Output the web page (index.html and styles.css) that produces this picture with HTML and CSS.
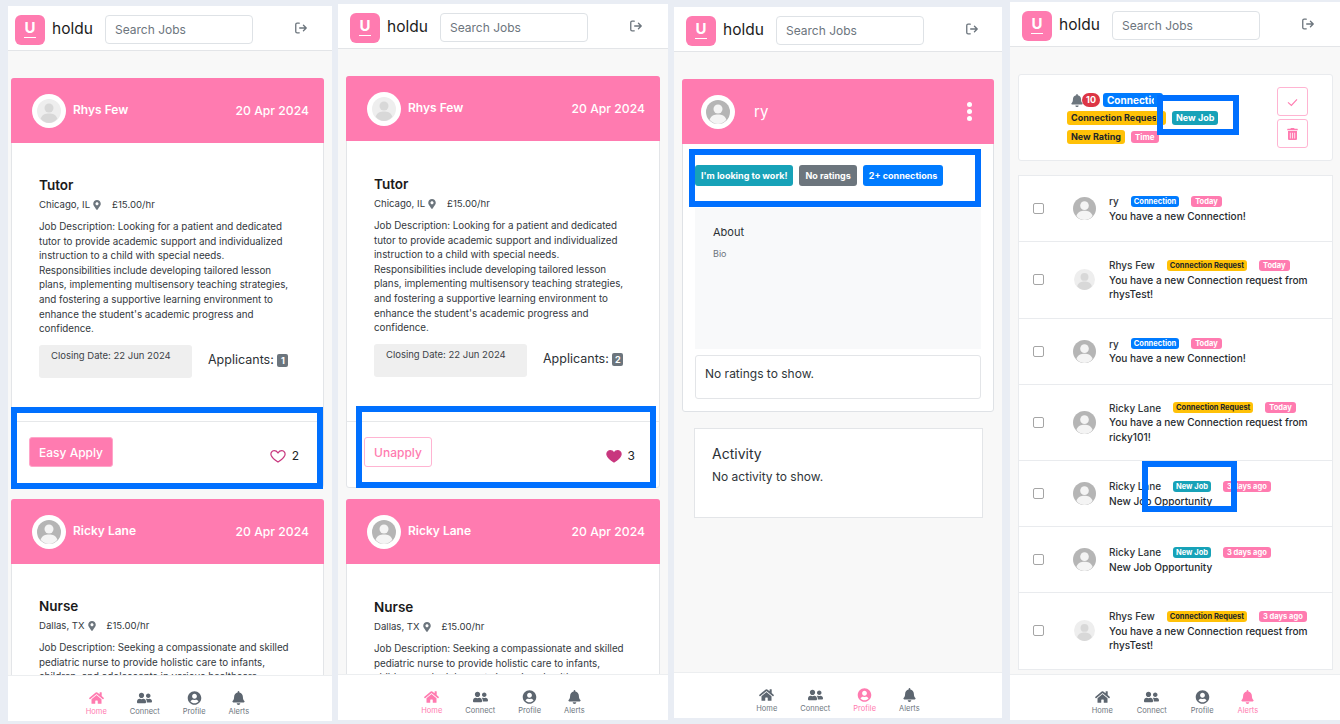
FILE: index.html
```html
<!DOCTYPE html>
<html>
<head>
<meta charset="utf-8"/>
<title>holdu</title>
<link rel="stylesheet" href="styles.css">
</head>
<body>

<svg class="defs" width="0" height="0">
  <symbol id="i-home" viewBox="0 0 576 512"><path d="M280.37 148.26L96 300.11V464a16 16 0 0 0 16 16l112.06-.29a16 16 0 0 0 15.92-16V368a16 16 0 0 1 16-16h64a16 16 0 0 1 16 16v95.64a16 16 0 0 0 16 16.05L464 480a16 16 0 0 0 16-16V300L295.67 148.26a12.19 12.19 0 0 0-15.3 0zM571.6 251.47L488 182.56V44.05a12 12 0 0 0-12-12h-56a12 12 0 0 0-12 12v72.61L318.47 43a48 48 0 0 0-61 0L4.34 251.47a12 12 0 0 0-1.6 16.9l25.5 31A12 12 0 0 0 45.15 301l235.22-193.74a12.19 12.19 0 0 1 15.3 0L530.9 301a12 12 0 0 0 16.9-1.6l25.5-31a12 12 0 0 0-1.7-16.93z"/></symbol>
  <symbol id="i-users" viewBox="0 0 640 512"><path d="M192 256c61.9 0 112-50.1 112-112S253.9 32 192 32 80 82.1 80 144s50.1 112 112 112zm76.8 32h-8.3c-20.8 10-43.9 16-68.5 16s-47.6-6-68.5-16h-8.3C51.6 288 0 339.6 0 403.2V432c0 26.5 21.5 48 48 48h288c26.5 0 48-21.5 48-48v-28.8c0-63.6-51.6-115.2-115.2-115.2zM480 256c53 0 96-43 96-96s-43-96-96-96-96 43-96 96 43 96 96 96zm48 32h-3.8c-13.9 4.8-28.6 8-44.2 8s-30.3-3.2-44.2-8H432c-20.4 0-39.2 5.9-55.7 15.4 24.4 26.3 39.7 61.2 39.7 99.8v38.4c0 2.2-.5 4.3-.6 6.4H592c26.5 0 48-21.5 48-48 0-61.9-50.1-112-112-112z"/></symbol>
  <symbol id="i-profile" viewBox="0 0 496 512"><path d="M248 8C111 8 0 119 0 256s111 248 248 248 248-111 248-248S385 8 248 8zm0 96c48.6 0 88 39.4 88 88s-39.4 88-88 88-88-39.4-88-88 39.4-88 88-88zm0 344c-58.7 0-111.3-26.6-146.5-68.2 18.8-35.4 55.6-59.8 98.5-59.8 2.4 0 4.8.4 7.1 1.1 13 4.2 26.6 6.9 40.9 6.9 14.3 0 28-2.7 40.9-6.9 2.3-.7 4.7-1.1 7.1-1.1 42.9 0 79.7 24.4 98.5 59.8C359.3 421.4 306.7 448 248 448z"/></symbol>
  <symbol id="i-bell" viewBox="0 0 448 512"><path d="M224 512c35.32 0 63.97-28.65 63.97-64H160.03c0 35.35 28.65 64 63.97 64zm215.39-149.71c-19.32-20.76-55.47-51.99-55.47-154.29 0-77.7-54.48-139.9-127.94-155.16V32c0-17.67-14.32-32-31.98-32s-31.98 14.33-31.98 32v20.84C118.56 68.1 64.08 130.3 64.08 208c0 102.3-36.15 133.53-55.47 154.29-6 6.45-8.66 14.16-8.61 21.71.11 16.4 12.98 32 32.1 32h383.8c19.12 0 32-15.6 32.1-32 .05-7.55-2.61-15.27-8.61-21.71z"/></symbol>
  <symbol id="i-pin" viewBox="0 0 384 512"><path d="M172.268 501.67C26.97 291.031 0 268.413 0 192 0 85.961 85.961 0 192 0s192 85.961 192 192c0 76.413-26.97 99.031-172.268 309.67-9.535 13.774-29.93 13.773-39.464 0zM192 272c44.183 0 80-35.817 80-80s-35.817-80-80-80-80 35.817-80 80 35.817 80 80 80z"/></symbol>
  <symbol id="i-trash" viewBox="0 0 448 512"><path d="M32 464a48 48 0 0 0 48 48h288a48 48 0 0 0 48-48V128H32zm272-256a16 16 0 0 1 32 0v224a16 16 0 0 1-32 0zm-96 0a16 16 0 0 1 32 0v224a16 16 0 0 1-32 0zm-96 0a16 16 0 0 1 32 0v224a16 16 0 0 1-32 0zM432 32H312l-9.4-18.7A24 24 0 0 0 281.1 0H166.8a23.72 23.72 0 0 0-21.4 13.3L136 32H16A16 16 0 0 0 0 48v32a16 16 0 0 0 16 16h416a16 16 0 0 0 16-16V48a16 16 0 0 0-16-16z"/></symbol>
  <symbol id="i-heart" viewBox="0 0 24 24"><path d="M12 21s-8.5-5.3-10.3-10.2C.6 7.4 2.8 4 6.2 4c2.4 0 4.4 1.3 5.8 3.3C13.4 5.3 15.4 4 17.8 4c3.4 0 5.6 3.4 4.5 6.8C20.5 15.7 12 21 12 21z"/></symbol>
  <symbol id="i-logout" viewBox="0 0 16 16"><path d="M6 2.5H3.5a1.5 1.5 0 0 0-1.500 1.500v8a1.500 1.500 0 0 0 1.500 1.500H6M6.500 8H14M10.800 4.800 14 8l-3.200 3.200" fill="none" stroke="currentColor" stroke-width="1.500" stroke-linecap="round" stroke-linejoin="round"/></symbol>
  <symbol id="i-avatar" viewBox="0 0 40 40"><circle cx="20" cy="20" r="20" fill="currentColor"/><circle cx="20" cy="15" r="7.500" fill="var(--fg)"/><path d="M6 33c2-7 8-9 14-9s12 2 14 9c-3.500 4.500-8.500 7-14 7S9.500 37.500 6 33z" fill="var(--fg)"/></symbol>
</svg>

<!-- home, not applied -->
<section class="screen s1">
  <header class="top">
    <span class="logo"><span class="logo-u">U</span></span>
    <span class="brand">holdu</span>
    <input class="search" placeholder="Search Jobs">
    <svg class="logout"><use href="#i-logout"/></svg>
  </header>
  <main class="feed">
    <article class="job">
      <div class="job-head">
        <span class="ring"><svg class="av av-light"><use href="#i-avatar"/></svg></span>
        <span class="poster">Rhys Few</span>
        <span class="posted">20 Apr 2024</span>
      </div>
      <div class="job-body">
        <h2 class="job-title">Tutor</h2>
        <p class="job-meta">Chicago, IL <svg class="pin"><use href="#i-pin"/></svg><span class="pay">£15.00/hr</span></p>
        <p class="job-desc">Job Description: Looking for a patient and dedicated<br>tutor to provide academic support and individualized<br>instruction to a child with special needs.<br>Responsibilities include developing tailored lesson<br>plans, implementing multisensory teaching strategies,<br>and fostering a supportive learning environment to<br>enhance the student's academic progress and<br>confidence.</p>
        <div class="job-info">
          <div class="closing">Closing Date: 22 Jun 2024</div>
          <div class="applicants">Applicants: <span class="count">1</span></div>
        </div>
      </div>
      <div class="job-foot">
        <button class="btn-apply">Easy Apply</button>
        <span class="likes"><svg class="heart"><use href="#i-heart"/></svg>2</span>
      </div>
    </article>
    <article class="job">
      <div class="job-head">
        <span class="ring"><svg class="av av-grey"><use href="#i-avatar"/></svg></span>
        <span class="poster">Ricky Lane</span>
        <span class="posted">20 Apr 2024</span>
      </div>
      <div class="job-body">
        <h2 class="job-title">Nurse</h2>
        <p class="job-meta">Dallas, TX <svg class="pin"><use href="#i-pin"/></svg><span class="pay">£15.00/hr</span></p>
        <p class="job-desc">Job Description: Seeking a compassionate and skilled<br>pediatric nurse to provide holistic care to infants,<br>children, and adolescents in various healthcare</p>
      </div>
    </article>
  </main>
  <nav class="tabs">
    <a class="tab on"><svg><use href="#i-home"/></svg>Home</a>
    <a class="tab"><svg><use href="#i-users"/></svg>Connect</a>
    <a class="tab"><svg><use href="#i-profile"/></svg>Profile</a>
    <a class="tab"><svg><use href="#i-bell"/></svg>Alerts</a>
  </nav>
</section>

<!-- home, applied -->
<section class="screen s2">
  <header class="top">
    <span class="logo"><span class="logo-u">U</span></span>
    <span class="brand">holdu</span>
    <input class="search" placeholder="Search Jobs">
    <svg class="logout"><use href="#i-logout"/></svg>
  </header>
  <main class="feed">
    <article class="job">
      <div class="job-head">
        <span class="ring"><svg class="av av-light"><use href="#i-avatar"/></svg></span>
        <span class="poster">Rhys Few</span>
        <span class="posted">20 Apr 2024</span>
      </div>
      <div class="job-body">
        <h2 class="job-title">Tutor</h2>
        <p class="job-meta">Chicago, IL <svg class="pin"><use href="#i-pin"/></svg><span class="pay">£15.00/hr</span></p>
        <p class="job-desc">Job Description: Looking for a patient and dedicated<br>tutor to provide academic support and individualized<br>instruction to a child with special needs.<br>Responsibilities include developing tailored lesson<br>plans, implementing multisensory teaching strategies,<br>and fostering a supportive learning environment to<br>enhance the student's academic progress and<br>confidence.</p>
        <div class="job-info">
          <div class="closing">Closing Date: 22 Jun 2024</div>
          <div class="applicants">Applicants: <span class="count">2</span></div>
        </div>
      </div>
      <div class="job-foot">
        <button class="btn-unapply">Unapply</button>
        <span class="likes"><svg class="heart full"><use href="#i-heart"/></svg>3</span>
      </div>
    </article>
    <article class="job">
      <div class="job-head">
        <span class="ring"><svg class="av av-grey"><use href="#i-avatar"/></svg></span>
        <span class="poster">Ricky Lane</span>
        <span class="posted">20 Apr 2024</span>
      </div>
      <div class="job-body">
        <h2 class="job-title">Nurse</h2>
        <p class="job-meta">Dallas, TX <svg class="pin"><use href="#i-pin"/></svg><span class="pay">£15.00/hr</span></p>
        <p class="job-desc">Job Description: Seeking a compassionate and skilled<br>pediatric nurse to provide holistic care to infants,<br>children, and adolescents in various healthcare</p>
      </div>
    </article>
  </main>
  <nav class="tabs">
    <a class="tab on"><svg><use href="#i-home"/></svg>Home</a>
    <a class="tab"><svg><use href="#i-users"/></svg>Connect</a>
    <a class="tab"><svg><use href="#i-profile"/></svg>Profile</a>
    <a class="tab"><svg><use href="#i-bell"/></svg>Alerts</a>
  </nav>
</section>

<!-- profile -->
<section class="screen s3">
  <header class="top">
    <span class="logo"><span class="logo-u">U</span></span>
    <span class="brand">holdu</span>
    <input class="search" placeholder="Search Jobs">
    <svg class="logout"><use href="#i-logout"/></svg>
  </header>
  <main class="feed profile">
    <article class="pcard">
      <div class="job-head phead">
        <span class="ring"><svg class="av av-grey"><use href="#i-avatar"/></svg></span>
        <span class="pname">ry</span>
        <span class="dots"><i></i><i></i><i></i></span>
      </div>
      <div class="pbadges">
        <span class="pill teal">I'm looking to work!</span>
        <span class="pill grey">No ratings</span>
        <span class="pill blue">2+ connections</span>
      </div>
      <div class="about">
        <h3>About</h3>
        <p>Bio</p>
      </div>
      <div class="noratings">No ratings to show.</div>
    </article>
    <article class="activity">
      <h3>Activity</h3>
      <p>No activity to show.</p>
    </article>
  </main>
  <nav class="tabs">
    <a class="tab"><svg><use href="#i-home"/></svg>Home</a>
    <a class="tab"><svg><use href="#i-users"/></svg>Connect</a>
    <a class="tab on"><svg><use href="#i-profile"/></svg>Profile</a>
    <a class="tab"><svg><use href="#i-bell"/></svg>Alerts</a>
  </nav>
</section>

<!-- alerts -->
<section class="screen s4">
  <header class="top">
    <span class="logo"><span class="logo-u">U</span></span>
    <span class="brand">holdu</span>
    <input class="search" placeholder="Search Jobs">
    <svg class="logout"><use href="#i-logout"/></svg>
  </header>
  <main class="feed alerts">
    <div class="summary">
      <div class="legend">
        <div class="legend-row first">
          <svg class="lbell"><use href="#i-bell"/></svg><span class="tag red">10</span><span class="tag blue"><span class="cut cut1">Connection</span></span>
        </div>
        <div class="legend-row">
          <span class="tag yellow"><span class="cut cut2">Connection Request</span></span><span class="tag teal">New Job</span>
        </div>
        <div class="legend-row">
          <span class="tag yellow">New Rating</span><span class="tag pink small">Time</span>
        </div>
      </div>
      <div class="actions">
        <button class="act"><svg viewBox="0 0 16 16"><path d="M2 8.500 6.500 12.500 14 4.500" fill="none" stroke="currentColor" stroke-width="1.500"/></svg></button>
        <button class="act"><svg><use href="#i-trash"/></svg></button>
      </div>
    </div>
    <div class="alist">
      <div class="arow">
        <input class="tick" type="checkbox">
        <svg class="aav av-grey"><use href="#i-avatar"/></svg>
        <div class="atext">
          <div class="aline"><span class="aname">ry</span><span class="mini blue">Connection</span><span class="mini pink">Today</span></div>
          <p>You have a new Connection!</p>
        </div>
      </div>
      <div class="arow tall">
        <input class="tick" type="checkbox">
        <svg class="aav sm av-light"><use href="#i-avatar"/></svg>
        <div class="atext">
          <div class="aline"><span class="aname">Rhys Few</span><span class="mini yellow">Connection Request</span><span class="mini pink">Today</span></div>
          <p>You have a new Connection request from<br>rhysTest!</p>
        </div>
      </div>
      <div class="arow">
        <input class="tick" type="checkbox">
        <svg class="aav av-grey"><use href="#i-avatar"/></svg>
        <div class="atext">
          <div class="aline"><span class="aname">ry</span><span class="mini blue">Connection</span><span class="mini pink">Today</span></div>
          <p>You have a new Connection!</p>
        </div>
      </div>
      <div class="arow tall">
        <input class="tick" type="checkbox">
        <svg class="aav av-grey"><use href="#i-avatar"/></svg>
        <div class="atext">
          <div class="aline"><span class="aname">Ricky Lane</span><span class="mini yellow">Connection Request</span><span class="mini pink">Today</span></div>
          <p>You have a new Connection request from<br>ricky101!</p>
        </div>
      </div>
      <div class="arow">
        <input class="tick" type="checkbox">
        <svg class="aav av-grey"><use href="#i-avatar"/></svg>
        <div class="atext">
          <div class="aline"><span class="aname">Ricky Lane</span><span class="mini teal">New Job</span><span class="mini pink">3 days ago</span></div>
          <p>New Job Opportunity</p>
        </div>
      </div>
      <div class="arow">
        <input class="tick" type="checkbox">
        <svg class="aav av-grey"><use href="#i-avatar"/></svg>
        <div class="atext">
          <div class="aline"><span class="aname">Ricky Lane</span><span class="mini teal">New Job</span><span class="mini pink">3 days ago</span></div>
          <p>New Job Opportunity</p>
        </div>
      </div>
      <div class="arow tall">
        <input class="tick" type="checkbox">
        <svg class="aav sm av-light"><use href="#i-avatar"/></svg>
        <div class="atext">
          <div class="aline"><span class="aname">Rhys Few</span><span class="mini yellow">Connection Request</span><span class="mini pink">3 days ago</span></div>
          <p>You have a new Connection request from<br>rhysTest!</p>
        </div>
      </div>
    </div>
  </main>
  <nav class="tabs">
    <a class="tab"><svg><use href="#i-home"/></svg>Home</a>
    <a class="tab"><svg><use href="#i-users"/></svg>Connect</a>
    <a class="tab"><svg><use href="#i-profile"/></svg>Profile</a>
    <a class="tab on"><svg><use href="#i-bell"/></svg>Alerts</a>
  </nav>
</section>

<!-- annotation boxes drawn over the screens -->
<div class="mark m1"></div>
<div class="mark m2"></div>
<div class="mark m3"></div>
<div class="mark m4"></div>
<div class="mark m5"></div>

</body>
</html>
```

FILE: styles.css
```css
html, body {
  margin: 0;
  height: 724px;
  overflow: hidden;
  background-color: #e9edf4;
  font-family: "Inter", "Liberation Sans", sans-serif;
  color: #212529;
}

p, h2, h3 {
  margin: 0;
}

.defs {
  position: absolute;
}

/* the four phone captures sit freely on the canvas */
.screen {
  position: absolute;
  display: flex;
  flex-direction: column;
  overflow: hidden;
  background-color: #f8f8f8;
}
.s1 { left: 8px; top: 6px; width: 324px; height: 715px; }
.s2 { left: 338px; top: 4px; width: 330px; height: 716px; }
.s3 { left: 674px; top: 7px; width: 328px; height: 711px; }
.s4 { left: 1010px; top: 2px; width: 330px; height: 718px; }

/* header */
.top {
  flex: none;
  height: 45px;
  display: flex;
  align-items: center;
  padding: 0 7px;
  box-sizing: border-box;
  background-color: #fff;
  border-bottom: 1px solid #e3e5e8;
}
.s2 .top, .s4 .top { padding-left: 12px; }
.s3 .top { padding-left: 12px; }
.logo {
  flex: none;
  width: 30px;
  height: 30px;
  border-radius: 6px;
  background-color: #ff7bb0;
  display: flex;
  justify-content: center;
  margin-top: 3px;
}
.logo-u {
  margin-top: 5px;
  height: 17px;
  padding: 0 1px;
  font-size: 15px;
  line-height: 16px;
  font-weight: 700;
  color: #fff;
  border-bottom: 1.5px solid #fff;
}
.brand {
  flex: none;
  margin-left: 7px;
  font-size: 15.5px;
  color: #1c1c1c;
  width: 53px;
}
.search {
  flex: none;
  width: 148px;
  height: 29px;
  box-sizing: border-box;
  padding: 0 9px;
  border: 1px solid #dee2e6;
  border-radius: 4px;
  background-color: #fff;
  font-family: inherit;
  font-size: 12px;
  margin-top: 2px;
}
.search::placeholder {
  color: #6c757d;
  opacity: 1;
}
.logout {
  flex: none;
  width: 14px;
  height: 14px;
  margin-left: 41px;
  color: #6c757d;
}

.feed {
  flex: 1;
  min-height: 0;
  overflow: hidden;
  padding: 27px 8px 0 3px;
}
.s2 .feed { padding-left: 8px; }

/* job card */
.job {
  background-color: #fff;
  border: 1px solid #e3e5e8;
  border-radius: 3px;
  margin-bottom: 11px;
}
.job-head {
  height: 65px;
  display: flex;
  align-items: center;
  padding: 0 15px 0 21px;
  box-sizing: border-box;
  margin: -1px -1px 0;
  background-color: #ff7bb0;
  color: #fff;
  border-radius: 3px 3px 0 0;
}
.ring {
  flex: none;
  width: 34px;
  height: 34px;
  box-sizing: border-box;
  border-radius: 50%;
  background-color: #fff;
  padding: 5px;
  display: block;
}
.av {
  display: block;
  width: 24px;
  height: 24px;
}
.av-light { color: #eeeeee; --fg: #d8d8d8; }
.av-grey { color: #b5b5b5; --fg: #f4f4f4; }
.poster {
  margin-left: 7px;
  font-size: 12px;
  font-weight: 600;
  margin-bottom: 3px;
}
.posted {
  margin-left: auto;
  font-size: 12.2px;
  font-weight: 500;
}
.job-body {
  padding: 33px 20px 0 27px;
  height: 245px;
}
.s2 .job-body {
  padding-top: 34px;
  height: 246px;
}
.job-title {
  font-size: 13.5px;
  line-height: 18px;
  font-weight: 600;
  color: #1a1a1a;
}
.job-meta {
  margin-top: 4px;
  font-size: 9.6px;
  line-height: 14px;
  display: flex;
  align-items: center;
  gap: 3px;
  color: #33383d;
}
.pin {
  width: 8px;
  height: 10px;
  fill: #6c757d;
}
.pay {
  margin-left: 8px;
}
.job-desc {
  margin-top: 8px;
  font-size: 9.8px;
  line-height: 14.6px;
  white-space: nowrap;
  color: #33383d;
}
.job-info {
  display: flex;
  margin-top: 8px;
}
.closing {
  width: 153px;
  height: 33px;
  box-sizing: border-box;
  padding: 4px 12px;
  background-color: #efefef;
  border-radius: 3px;
  font-size: 9.5px;
  line-height: 13px;
  color: #3c4248;
}
.applicants {
  margin: 6px 0 0 16px;
  font-size: 12.5px;
  line-height: 17px;
  color: #2c3136;
}
.count {
  display: inline-block;
  min-width: 11px;
  text-align: center;
  background-color: #6c757d;
  color: #fff;
  border-radius: 2px;
  font-size: 9px;
  line-height: 13px;
  font-weight: 700;
}
.job-foot {
  display: flex;
  align-items: center;
  justify-content: space-between;
  height: 61px;
  padding: 0 24px 4px 17px;
  border-top: 1px solid #e6e8ea;
}
.btn-apply, .btn-unapply {
  height: 30px;
  box-sizing: border-box;
  border-radius: 3px;
  font-family: inherit;
  font-size: 12px;
  font-weight: 500;
  padding: 0;
  margin-top: -1px;
}
.btn-apply {
  width: 84px;
  background-color: #ff7bb0;
  border: 1px solid #ffa5c9;
  color: #fff;
}
.btn-unapply {
  width: 68px;
  background-color: #fff;
  border: 1px solid #ffb4d2;
  color: #ff7bb0;
}
.likes {
  display: flex;
  align-items: center;
  gap: 6px;
  font-size: 12px;
  margin-top: 6px;
}
.heart {
  width: 16px;
  height: 16px;
  fill: none;
  stroke: #c8377e;
  stroke-width: 1.800;
}
.heart.full {
  fill: #c8377e;
}

/* bottom tabs */
.tabs {
  flex: none;
  position: relative;
  height: 46px;
  display: flex;
  justify-content: center;
  gap: 23px;
  padding: 15px 5px 0 0;
  box-sizing: border-box;
  background-color: #fff;
  border-top: 1px solid #eceef0;
}
.s2 .tabs, .s3 .tabs { padding-right: 0; }
.s4 .tabs {
  padding-right: 0;
  gap: 24px;
}
.tab {
  display: flex;
  flex-direction: column;
  align-items: center;
  gap: 1px;
  font-size: 7.500px;
  line-height: 11px;
  color: #6c757d;
}
.tab svg {
  width: 15px;
  height: 14px;
  fill: #5d6670;
}
.tab.on {
  color: #ff7bb0;
}
.tab.on svg {
  fill: #ff7bb0;
}

/* profile */
.s3 .profile {
  padding: 27px 8px 0 8px;
}
.pcard {
  background-color: #fff;
  border: 1px solid #dfe2e6;
  border-radius: 3px;
  height: 333px;
  box-sizing: border-box;
}
.phead {
  padding: 0 22px 0 19px;
}
.pname {
  margin-left: 19px;
  font-size: 15px;
}
.dots {
  margin-left: auto;
  display: flex;
  flex-direction: column;
  gap: 2px;
}
.dots i {
  width: 5px;
  height: 5px;
  border-radius: 50%;
  background-color: #fff;
}
.pbadges {
  display: flex;
  gap: 6px;
  padding: 21px 0 0 12px;
  height: 43px;
}
.pill {
  height: 21px;
  line-height: 21px;
  padding: 0 6px;
  border-radius: 3px;
  font-size: 9px;
  font-weight: 700;
  color: #fff;
  white-space: nowrap;
}
.pill.teal { background-color: #17a2b8; }
.pill.grey { background-color: #6c757d; }
.pill.blue { background-color: #007bff; }
.about {
  margin: 0 12px 0 12px;
  height: 141px;
  box-sizing: border-box;
  padding: 17px 18px;
  background-color: #f8f9fa;
}
.about h3 {
  font-size: 11px;
  line-height: 14px;
  font-weight: 400;
  color: #2b3035;
}
.about p {
  margin-top: 9px;
  font-size: 9px;
  line-height: 12px;
  color: #6c757d;
}
.noratings {
  margin: 6px 12px 0;
  height: 44px;
  box-sizing: border-box;
  padding: 0 9px;
  border: 1px solid #e3e5e8;
  border-radius: 3px;
  font-size: 12px;
  line-height: 36px;
  color: #30353a;
}
.activity {
  margin: 16px 11px 0 12px;
  height: 90px;
  box-sizing: border-box;
  padding: 16px 17px;
  background-color: #fff;
  border: 1px solid #e3e5e8;
}
.activity h3 {
  font-size: 14px;
  line-height: 18px;
  font-weight: 400;
  color: #2b3035;
}
.activity p {
  margin-top: 6px;
  font-size: 12px;
  line-height: 16px;
  color: #30353a;
}

/* alerts */
.s4 .alerts {
  padding: 27px 7px 0 8px;
}
.summary {
  height: 87px;
  box-sizing: border-box;
  background-color: #fff;
  border: 1px solid #e9ebee;
  border-radius: 3px;
  display: flex;
  justify-content: space-between;
  padding: 12px 24px 0 48px;
}
.legend {
  padding-top: 6px;
}
.legend-row {
  display: flex;
  align-items: center;
  gap: 6px;
  height: 14px;
  margin-bottom: 5px;
}
.legend-row.first {
  gap: 0;
  margin-left: 4px;
  margin-bottom: 4px;
}
.lbell {
  width: 12px;
  height: 13px;
  fill: #6c757d;
}
.tag {
  display: block;
  height: 14px;
  line-height: 14px;
  padding: 0 4px;
  border-radius: 3px;
  font-size: 9px;
  font-weight: 700;
  color: #fff;
  white-space: nowrap;
}
.tag.red { background-color: #dc3545; border-radius: 7px; margin-left: -1px; }
.tag.blue { background-color: #007bff; margin-left: 3px; font-size: 10px; padding-right: 9px; }
.tag.yellow { background-color: #ffc107; color: #212529; }
.tag.teal { background-color: #17a2b8; }
.tag.pink { background-color: #ff7bb0; }
.tag.small { font-size: 8px; height: 12px; line-height: 12px; }
.tag.yellow:has(.cut2) { padding-right: 10px; }
.cut {
  display: block;
  overflow: hidden;
}
.cut1 { width: 47px; }
.cut2 { width: 85px; }
.actions {
  display: flex;
  flex-direction: column;
  gap: 3px;
}
.act {
  display: block;
  width: 31px;
  height: 29px;
  padding: 0;
  background-color: #fff;
  border: 1px solid #ffb4d2;
  border-radius: 3px;
  color: #ff7bb0;
}
.act svg {
  display: block;
  margin: auto;
  width: 13px;
  height: 12px;
  fill: #ff7bb0;
}
.alist {
  margin-top: 14px;
  background-color: #fff;
  border: 1px solid #e9ebee;
  border-bottom: none;
}
.arow {
  height: 66px;
  box-sizing: border-box;
  display: flex;
  align-items: center;
  padding-left: 14px;
  border-bottom: 1px solid #e9ebee;
}
.arow.tall {
  height: 76.500px;
}
.tick {
  appearance: none;
  flex: none;
  width: 11px;
  height: 11px;
  margin: 0;
  border: 1px solid #a5a5a5;
  border-radius: 2px;
  background-color: #fff;
}
.aav {
  flex: none;
  width: 23px;
  height: 23px;
  margin: 0 13px 0 29px;
}
.aav.sm {
  width: 21px;
  height: 21px;
  margin: 0 14px 0 30px;
}
.aline {
  display: flex;
  align-items: center;
  gap: 12px;
  height: 15px;
}
.aname {
  font-size: 10px;
  font-weight: 500;
  color: #2f3438;
}
.mini {
  display: block;
  height: 11px;
  line-height: 11px;
  padding: 0 3px;
  border-radius: 3px;
  font-size: 7.500px;
  font-weight: 700;
  color: #fff;
  white-space: nowrap;
}
.mini.blue { background-color: #007bff; }
.mini.pink { background-color: #ff7bb0; padding: 0 4px; }
.mini.teal { background-color: #17a2b8; }
.mini.yellow { background-color: #ffc107; color: #212529; }
.atext p {
  font-size: 10.1px;
  line-height: 14.600px;
  font-weight: 500;
  color: #262b2f;
  white-space: nowrap;
}

/* blue annotation boxes */
.mark {
  position: absolute;
  box-sizing: border-box;
  border: 6px solid #0070ff;
}
.m1 { left: 11px; top: 407px; width: 312px; height: 82px; }
.m2 { left: 356px; top: 406px; width: 300px; height: 82px; }
.m3 { left: 689px; top: 149px; width: 292px; height: 58px; }
.m4 { left: 1157px; top: 95px; width: 82px; height: 40px; }
.m5 { left: 1142px; top: 461px; width: 95px; height: 51px; }
```
